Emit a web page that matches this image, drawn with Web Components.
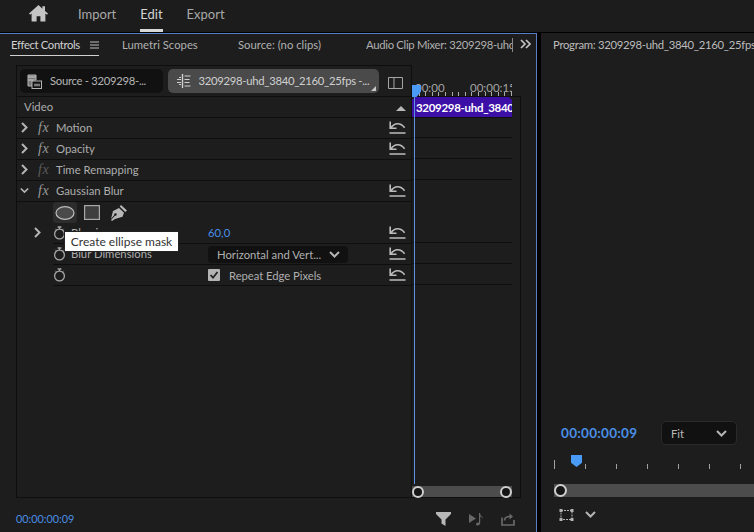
<!DOCTYPE html>
<html><head><meta charset="utf-8"><style>
html,body{margin:0;height:100%;background:#000;overflow:hidden}
body{width:754px;height:532px;font:11.3px Lato,"Liberation Sans",sans-serif;color:#b0b0b0;display:flex;flex-direction:column}
</style></head><body>
<pp-topbar></pp-topbar>
<pp-workspace>
  <pp-effect-panel slot="left" time="00:00:00:09"></pp-effect-panel>
  <pp-program slot="right"></pp-program>
</pp-workspace>
<script>
const ICON={
reset:'<svg width="17" height="13" viewBox="0 0 17 13" fill="none" stroke="#bcbcbc" stroke-width="1.6"><path d="M1.200 .5v6.700h6.300M1.800 7C5.500 1.600 11.500 1.200 15.600 6.800M.5 12h16"/></svg>',
watch:'<svg width="13" height="14" viewBox="0 0 13 14" fill="none" stroke="#a6a6a6" stroke-width="1.3"><circle cx="6.500" cy="8" r="4.900"/><path d="M4.600 1h3.800M6.500 1v2"/><path d="M2.400 2.800l1 1M10.600 2.800l-1 1" stroke-width="1"/></svg>',
right:'<svg width="9" height="11" viewBox="0 0 9 11" fill="none" stroke="#b4b4b4" stroke-width="2"><path d="M2 1l4.500 4.500L2 10"/></svg>',
down:'<svg width="11" height="9" viewBox="0 0 11 9" fill="none" stroke="#b4b4b4" stroke-width="2"><path d="M1 2l4.500 4.500L10 2"/></svg>'
};
function def(name,css,html){
  customElements.define(name,class extends HTMLElement{
    constructor(){super();this.attachShadow({mode:'open'})}
    connectedCallback(){
      this.shadowRoot.innerHTML='<style>'+css+'</style>'+(typeof html==='function'?html(this):html);
    }
  });
}
def('pp-topbar',`
:host{display:flex;height:32px;flex:none;background:#1c1c1c;align-items:stretch;font-size:13px;color:#a8a8a8}
.home{width:78px;display:flex;padding:5px 0 0 29px;box-sizing:border-box}
a{display:flex;align-items:center;margin-right:24px;padding-bottom:5px;box-sizing:border-box}
a.on{color:#d4d4d4;border-bottom:3px solid #d8d8d8;padding-bottom:2px}
.home svg{display:block}
`,`<div class="home"><svg width="19" height="17" viewBox="0 0 19 17" fill="#c4c4c4"><path d="M9.500 0L0 8.600l1 1.200 1.600-1.300V16.500h5v-5.200h3.800v5.200h5V8.500l1.600 1.300 1-1.200-3-2.700V1.200h-2.600v2.500z"/></svg></div><a>Import</a><a class="on">Edit</a><a>Export</a>`);

def('pp-workspace',`
:host{display:flex;flex:1;min-height:0;padding-top:1px;gap:4px}
`,`<slot name="left"></slot><slot name="right"></slot>`);

def('pp-effect-panel',`
:host{display:flex;flex-direction:column;width:537px;box-sizing:border-box;flex:none;background:#1d1d1d;border-top:1px solid #5a7cc0;border-right:1px solid #5a7cc0}
.tabs{display:flex;height:22px;align-items:center;flex:none;position:relative;white-space:nowrap;margin-bottom:9px}
.tabs span{display:block;padding-bottom:1px;box-sizing:border-box}
.t1{flex:none;margin-left:10px;padding:0 0 0 1px!important;height:22px;width:89px;border-bottom:1px solid #d0d0d0;color:#d0d0d0;display:flex!important;align-items:center;letter-spacing:-.36px}
.t1 svg{margin-left:10px;flex:none}
.t2{margin-left:23px;width:116px;flex:none}.t3{width:128px;flex:none}
.t4{width:147px;flex:none;overflow:hidden;border-right:1px solid #888;height:14px;line-height:13px;letter-spacing:-.3px}
.more{margin-left:7px;display:flex}
.box{flex:1;margin-left:16px;width:505px;box-sizing:border-box;display:flex;flex-direction:column;min-height:0;position:relative;margin-bottom:34px}
.head{display:flex;height:31px;flex:none}
.srcs{width:396px;box-sizing:border-box;border:1px solid #0e0e0e;border-bottom:0;display:flex;padding:3px 8px 0 3px;align-items:flex-start}
.src{height:24px;border-radius:5px;display:flex;align-items:center;box-sizing:border-box;color:#b4b4b4;white-space:nowrap;position:relative}
.src span{letter-spacing:-.3px;padding-bottom:1px}
.s1{width:143px;background:#111;padding-left:7px;gap:8px}
.s2{width:212px;margin-left:5px;background:#4a4a4a;padding-left:9px;gap:8px;color:#d0d0d0}
.s2 i{position:absolute;right:3px;bottom:2px;border-style:solid;border-width:0 0 5px 5px;border-color:transparent transparent #c8c8c8}
.tog{margin:8px 0 0 9px}
.ruler{position:relative;width:100px;overflow:hidden;font-size:11.500px;color:#a4a4a4;white-space:nowrap}
.ruler b{position:absolute;top:16px;font-weight:400;line-height:14px}
.ticks{position:absolute;left:0;right:0;bottom:0;height:4px;background:repeating-linear-gradient(90deg,#aaa 0 1px,transparent 1px 6.600px)}
.body{flex:1;display:flex;border:1px solid #0e0e0e;min-height:0;box-sizing:border-box}
.lcol{width:395px;box-sizing:border-box;border-right:1px solid #111;flex:none}
.rcol{width:100px;display:flex;flex-direction:column;flex:none}
.clip{height:20px;background:#3c0fa6;color:#fff;font-size:11.500px;font-weight:700;letter-spacing:-.3px;line-height:21px;padding-left:4px;overflow:hidden;white-space:nowrap;clip-path:polygon(3px 0,calc(100% - 3px) 0,100% 3px,100% 100%,0 100%,0 3px);box-sizing:content-box}
.tl{flex:none;height:21px;box-sizing:border-box;border-bottom:1px solid #0e0e0e}
.tl.n{border-bottom:0}
.sp{flex:1}
.bar{height:11px;background:#4c4c4c;flex:none;position:relative}
.h{position:absolute;top:-.5px;width:12px;height:12px;border-radius:50%;box-sizing:border-box;border:2px solid #cfcfcf;background:#151515}
.play{position:absolute;left:396px;top:20px;width:9px;height:12px;background:#4a9bf5;clip-path:polygon(0 0,100% 0,100% 55%,50% 100%,0 100%)}
.pline{position:absolute;left:397.500px;top:31px;height:388px;width:1px;background:#5b8fe0}
.foot{position:absolute;left:0;right:0;top:100%;height:34px;display:flex;align-items:center;padding-top:7px;box-sizing:border-box;color:#4a8fe6;font-size:10.800px}
.foot .ic{position:absolute;display:flex;top:14px}
.tip{position:absolute;left:49px;top:167px;width:113px;height:19px;background:#fff;box-shadow:0 0 0 1px #222;color:#333;font-size:12px;line-height:19px;text-align:center;white-space:nowrap}
`,(h)=>`
<div class="tabs"><span class="t1">Effect Controls<svg width="9" height="8" viewBox="0 0 9 8" stroke="#c0c0c0"><path d="M0 1h9M0 4h9M0 7h9"/></svg></span><span class="t2">Lumetri Scopes</span><span class="t3">Source: (no clips)</span><span class="t4">Audio Clip Mixer: 3209298-uhd_3840</span><span class="more"><svg width="11" height="10" viewBox="0 0 11 10" fill="none" stroke="#c4c4c4" stroke-width="1.700"><path d="M1 1l4 4-4 4M6 1l4 4-4 4"/></svg></span></div>
<div class="box">
 <div class="head">
  <div class="srcs">
   <div class="src s1"><svg width="15" height="15" viewBox="0 0 15 15" fill="none" stroke="#b4b4b4"><path d="M1 1h8v2H1zM1 3h8v3H1zM1 6h5v6H1z" fill="#777"/><rect x="5" y="7" width="9.500" height="7.500" fill="#111"/><path d="M7 11h6M8 9.500v3M10 9.500v3M12 9.500v3" stroke-width=".8"/></svg><span>Source - 3209298-...</span></div>
   <div class="src s2"><svg width="14" height="14" viewBox="0 0 14 14" fill="none" stroke="#d0d0d0"><path d="M5.500 0v14" stroke-width="1.400"/><path d="M7.500 2h6M7.500 5.500h5M7.500 8.500h5M7.500 12h6M0 5.500h4M0 8.500h4M2 3.500h2M2 10.500h2"/></svg><span>3209298-uhd_3840_2160_25fps -...</span><i></i></div>
   <svg class="tog" width="15" height="12" viewBox="0 0 15 12" fill="none" stroke="#a8a8a8"><path d="M.5.5h14v11H.5zM6 .5v11"/></svg>
  </div>
  <div class="ruler"><b style="left:3px">00:00</b><b style="left:58px">00:00:15</b><div class="ticks"></div></div>
 </div>
 <div class="body">
  <div class="lcol">
   <pp-row-video></pp-row-video>
   <pp-effect-row name="Motion" reset></pp-effect-row>
   <pp-effect-row name="Opacity" reset></pp-effect-row>
   <pp-effect-row name="Time Remapping" dim></pp-effect-row>
   <pp-effect-row name="Gaussian Blur" open reset></pp-effect-row>
   <pp-mask-row></pp-mask-row>
   <pp-param-row name="Blurriness" twirl><pp-value>60,0</pp-value></pp-param-row>
   <pp-param-row name="Blur Dimensions"><pp-select style="width:140px" text="Horizontal and Vert..."></pp-select></pp-param-row>
   <pp-param-row><pp-check label="Repeat Edge Pixels"></pp-check></pp-param-row>
  </div>
  <div class="rcol">
   <div class="clip">3209298-uhd_3840_2160_25fps</div>
   <div class="tl" style="border-top:1px solid #0e0e0e"></div><div class="tl"></div><div class="tl"></div><div class="tl n"></div><div class="tl n"></div>
   <div class="tl"></div><div class="tl"></div><div class="tl"></div>
   <div class="sp"></div>
   <div class="bar"><div class="h" style="left:0"></div><div class="h" style="right:0"></div></div>
  </div>
 </div>
 <div class="play"></div><div class="pline"></div>
 <div class="tip">Create ellipse mask</div>
 <div class="foot">${h.getAttribute('time')}
  <span class="ic" style="left:420px"><svg width="15" height="14" viewBox="0 0 15 14" fill="#b8b8b8"><path d="M0 0h15v2L9.500 7.500V14l-4-2.500V7.500L0 2z"/></svg></span>
  <span class="ic" style="left:453px;top:15px"><svg width="15" height="13" viewBox="0 0 15 13" fill="#686868"><path d="M0 1l7 4.500L0 10z"/><path d="M10 0h1.200v1c0 2 3 2.200 2.600 5-.4-1.600-1.600-2.200-2.600-2.400V10c0 1.600-1.600 2.600-3 2.400-1.600-.3-1.600-2 0-2.600.7-.3 1.300-.3 1.800 0z"/></svg></span>
  <span class="ic" style="left:485px;top:15px"><svg width="14" height="13" viewBox="0 0 14 13" fill="none" stroke="#686868" stroke-width="1.700"><path d="M1 4.500V12h12V7M3.500 7.500c0-3 2-4 6-4"/><path d="M8.500.5l3.500 3-3.500 3z" fill="#686868" stroke="none"/></svg></span>
 </div>
</div>`);

const rowCss=`:host{display:flex;align-items:center;height:21px;box-sizing:border-box;border-bottom:1px solid #0e0e0e;color:#aeaeae;white-space:nowrap;position:relative;padding-bottom:1px}
.r{position:absolute;left:372px;top:3px;display:flex}`;

def('pp-row-video',rowCss+`:host{padding-left:7px}i{position:absolute;left:379px;top:9px;border:solid transparent;border-width:0 5px 5px;border-bottom-color:#b8b8b8}`,`Video<i></i>`);

def('pp-effect-row',rowCss+`
.c{width:9px;margin-left:3px;display:flex;justify-content:center}
.fx{font:italic 14px "Liberation Serif",serif;color:#999;margin-left:9px;width:18px;letter-spacing:.5px}
.fx.d{color:#5c5c5c}
`,(h)=>`<span class="c">${h.hasAttribute('open')?ICON.down:ICON.right}</span><span class="fx ${h.hasAttribute('dim')?'d':''}">fx</span><span>${h.getAttribute('name')}</span>${h.hasAttribute('reset')?`<span class="r">${ICON.reset}</span>`:''}`);

def('pp-mask-row',`:host{display:flex;align-items:center;height:21px;box-sizing:border-box;padding-left:36px;gap:10px}
.e{width:24px;height:21px;background:#2c2c2c;border-radius:3px;display:flex;align-items:center;justify-content:center}
`,`<span class="e"><svg width="20" height="14" viewBox="0 0 20 14"><ellipse cx="10" cy="7" rx="9" ry="6.300" fill="#4a4a4a" stroke="#bdbdbd" stroke-width="1.200"/></svg></span>
<svg width="16" height="15" viewBox="0 0 16 15" style="margin-left:-3px"><rect x=".6" y=".6" width="14.800" height="13.800" fill="#3e3e3e" stroke="#a8a8a8" stroke-width="1.200"/></svg>
<svg width="16" height="16" viewBox="0 0 16 16" style="margin-left:1px" fill="#b8b8b8"><path d="M10 0l6 5.500-1.800 1.600-5.500-5.500zM8 3l5 4.700-1.500 4L4 14l-3 2-1-1 4-4.300a1.300 1.300 0 1 0-.8-.8L0 14l2-8z"/></svg>`);

def('pp-param-row',rowCss+`:host{margin-left:36px}
.c{position:absolute;left:-20px;top:4px;display:flex}
.w{display:flex;width:13px;margin-left:0;margin-top:0}
.n{position:absolute;left:18px}
.v{position:absolute;left:155px;top:0;height:20px;display:flex;align-items:center}
.r{left:336px}
`,(h)=>`${h.hasAttribute('twirl')?`<span class="c">${ICON.right}</span>`:''}<span class="w">${ICON.watch}</span><span class="n">${h.getAttribute('name')||''}</span><span class="v"><slot></slot></span><span class="r">${ICON.reset}</span>`);

def('pp-value',`:host{display:inline-block;color:#4a8fe6;font-size:11.300px;padding-bottom:1px}`,`<slot></slot>`);
def('pp-select',`:host{display:flex;height:17px;box-sizing:border-box;background:#111;border-radius:4px;align-items:center;padding:0 8px 0 9px;justify-content:space-between;color:#b0b0b0;white-space:nowrap}`,(h)=>`<span>${h.getAttribute('text')}</span>${ICON.down}`);
def('pp-check',`:host{display:flex;align-items:center;gap:9px;color:#aeaeae;letter-spacing:-.05px}
.b{width:12px;height:12px;background:#b4b4b4;border-radius:1px;display:flex}`,(h)=>`<span class="b"><svg width="12" height="12" viewBox="0 0 12 12" fill="none" stroke="#222" stroke-width="1.800"><path d="M2.500 6l2.500 2.700L9.500 3"/></svg></span><span>${h.getAttribute('label')}</span>`);

def('pp-program',`
:host{display:flex;flex-direction:column;flex:1;background:#1d1d1d;min-width:0;overflow:hidden;white-space:nowrap;position:relative}
.title{height:23px;flex:none;padding:0 0 1px 12px;display:flex;align-items:center;color:#bcbcbc;letter-spacing:-.28px}
.view{flex:1}
.ctl{display:flex;align-items:center;height:24px;flex:none;margin-bottom:10px}
.tc{margin-left:20px;width:100px;color:#4a8fe6;font-size:13.500px;font-weight:700;letter-spacing:.3px}
.fit{width:76px;height:24px;box-sizing:border-box;background:#111;border:1px solid #2a2a2a;border-radius:5px;display:flex;align-items:center;justify-content:space-between;padding:0 9px;color:#b8b8b8}
.rule{height:14px;flex:none;margin-left:13px;position:relative;display:flex;gap:30px;align-items:flex-end;padding-bottom:1px}
.rule i{width:1px;height:5px;background:#a0a0a0;flex:none}
.rule i:first-child{height:9px}
.rule b{position:absolute;left:17px;top:0;width:11px;height:12px;background:#4a9bf5;clip-path:polygon(0 0,100% 0,100% 65%,50% 100%,0 65%)}
.bar{margin:14px 0 0 13px;height:13px;background:#4c4c4c;position:relative;flex:none}
.bar u{position:absolute;left:0;top:0;width:13px;height:13px;box-sizing:border-box;border-radius:50%;border:2px solid #cfcfcf;background:#151515}
.tools{display:flex;align-items:center;height:35px;flex:none;padding-left:18px;gap:11px}
`,`<div class="title">Program: 3209298-uhd_3840_2160_25fps</div><div class="view"></div>
<div class="ctl"><span class="tc">00:00:00:09</span><span class="fit">Fit ${ICON.down}</span></div>
<div class="rule"><i></i><i></i><i></i><i></i><i></i><i></i><i></i><b></b></div>
<div class="bar"><u></u></div>
<div class="tools"><svg width="15" height="14" viewBox="0 0 15 14" fill="none" stroke="#b4b4b4"><path d="M2 2.500h11v9H2z" stroke-dasharray="2 1"/><path d="M.5 1h3v3h-3zM11.500 1h3v3h-3zM.5 10h3v3h-3zM11.500 10h3v3h-3z" fill="#b4b4b4" stroke="none"/></svg>${ICON.down}</div>`);
</script>
</body></html>
